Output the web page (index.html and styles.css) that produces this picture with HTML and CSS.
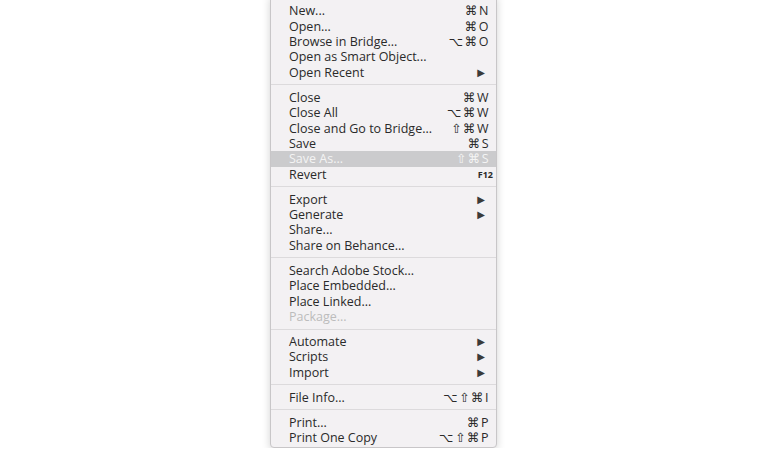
FILE: index.html
```html
<!DOCTYPE html>
<html lang="en">
<head>
  <meta charset="UTF-8" />
  <title>File Menu</title>
  <link rel="stylesheet" href="styles.css">
</head>
<body>

  <div class="menu">
    <div class="item"><span>New...</span><span class="key">⌘N</span></div>
    <div class="item"><span>Open...</span><span class="key">⌘O</span></div>
    <div class="item"><span>Browse in Bridge...</span><span class="key">⌥⌘O</span></div>
    <div class="item"><span>Open as Smart Object...</span></div>
    <div class="item"><span>Open Recent</span><span class="arrow">▶</span></div>
    <div class="sep"></div>

    <div class="item"><span>Close</span><span class="key">⌘W</span></div>
    <div class="item"><span>Close All</span><span class="key">⌥⌘W</span></div>
    <div class="item"><span>Close and Go to Bridge...</span><span class="key">⇧⌘W</span></div>
    <div class="item"><span>Save</span><span class="key">⌘S</span></div>
    <div class="item active"><span>Save As...</span><span class="key">⇧⌘S</span></div>
    <div class="item"><span>Revert</span><span class="key fkey">F12</span></div>
    <div class="sep"></div>

    <div class="item"><span>Export</span><span class="arrow">▶</span></div>
    <div class="item"><span>Generate</span><span class="arrow">▶</span></div>
    <div class="item"><span>Share...</span></div>
    <div class="item"><span>Share on Behance...</span></div>
    <div class="sep"></div>

    <div class="item"><span>Search Adobe Stock...</span></div>
    <div class="item"><span>Place Embedded...</span></div>
    <div class="item"><span>Place Linked...</span></div>
    <div class="item disabled"><span>Package...</span></div>
    <div class="sep"></div>

    <div class="item"><span>Automate</span><span class="arrow">▶</span></div>
    <div class="item"><span>Scripts</span><span class="arrow">▶</span></div>
    <div class="item"><span>Import</span><span class="arrow">▶</span></div>
    <div class="sep"></div>

    <div class="item"><span>File Info...</span><span class="key">⌥⇧⌘I</span></div>
    <div class="sep"></div>

    <div class="item"><span>Print...</span><span class="key">⌘P</span></div>
    <div class="item"><span>Print One Copy</span><span class="key">⌥⇧⌘P</span></div>
  </div>

</body>
</html>
```

FILE: styles.css
```css
html, body {
  margin: 0;
  background: #fff;
}
body {
  font-family: "Open Sans", "DejaVu Sans", sans-serif;
  font-size: 12.5px;
  color: #2a2a2a;
  overflow: hidden;
}
.menu {
  width: 225px;
  margin: -4px 0 0 270px;
  padding: 6px 0 2px;
  background: #f3f1f3;
  border: 1px solid #c8c6c8;
  border-radius: 0 0 4px 4px;
  box-shadow: 0 2px 8px rgba(0, 0, 0, 0.18);
}
.item {
  display: flex;
  justify-content: space-between;
  align-items: center;
  height: 15.4px;
  line-height: 15px;
  padding: 0 7px 0 18px;
  white-space: nowrap;
}
.key {
  font-family: "Open Sans", "DejaVu Sans", sans-serif;
  font-size: 12.5px;
  letter-spacing: 1.5px;
  margin-right: -1px;
}
.fkey {
  font-size: 9px;
  font-weight: bold;
  letter-spacing: 0;
  margin-right: -4px;
}
.arrow {
  font-family: "DejaVu Sans", sans-serif;
  font-size: 10px;
  color: #3a3a3a;
  margin-right: 4px;
}
.active {
  background: #cbcbcd;
  color: #f4f4f4;
}
.active .key {
  color: #f4f4f4;
}
.disabled {
  color: #bcbcbc;
}
.sep {
  height: 9.6px;
  display: flex;
  align-items: center;
}
.sep::after {
  content: "";
  display: block;
  width: 100%;
  height: 1px;
  background: #dcdadc;
}
```
